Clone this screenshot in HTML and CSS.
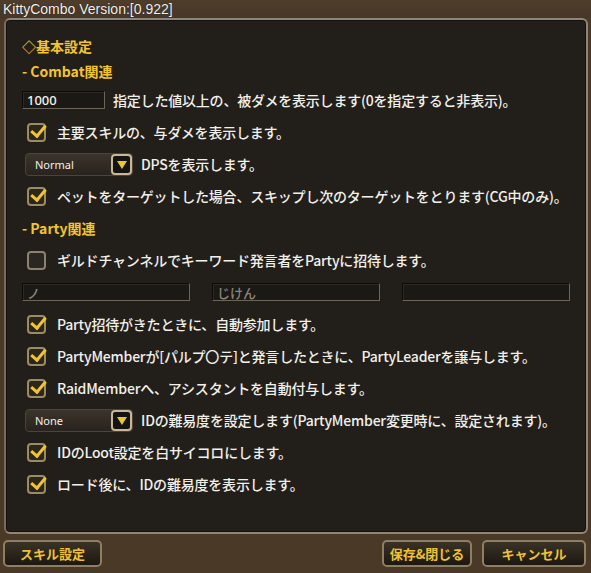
FILE: index.html
```html
<!DOCTYPE html>
<html lang="ja">
<head>
    <meta charset="UTF-8">
    <title>KittyCombo</title>
    <link rel="stylesheet" href="styles.css">
</head>
<body>
    <div class="window">
        <div class="titlebar">KittyCombo Version:[0.922]</div>

        <div class="panel">
            <div class="heading h1">◇基本設定</div>
            <div class="heading h2">- Combat関連</div>

            <div class="row">
                <input class="field field-num" type="text" value="1000">
                <span class="label">指定した値以上の、被ダメを表示します(0を指定すると非表示)。</span>
            </div>
            <div class="row">
                <span class="check on"></span>
                <span class="label">主要スキルの、与ダメを表示します。</span>
            </div>
            <div class="row">
                <div class="select"><span>Normal</span><i class="arrow"></i></div>
                <span class="label">DPSを表示します。</span>
            </div>
            <div class="row">
                <span class="check on"></span>
                <span class="label">ペットをターゲットした場合、スキップし次のターゲットをとります(CG中のみ)。</span>
            </div>

            <div class="heading row-head">- Party関連</div>

            <div class="row">
                <span class="check"></span>
                <span class="label">ギルドチャンネルでキーワード発言者をPartyに招待します。</span>
            </div>
            <div class="row fields">
                <input class="field field-wide" type="text" value="ノ">
                <input class="field field-wide" type="text" value="じけん">
                <input class="field field-wide" type="text" value="">
            </div>
            <div class="row">
                <span class="check on"></span>
                <span class="label">Party招待がきたときに、自動参加します。</span>
            </div>
            <div class="row">
                <span class="check on"></span>
                <span class="label">PartyMemberが[パルプ〇テ]と発言したときに、PartyLeaderを譲与します。</span>
            </div>
            <div class="row">
                <span class="check on"></span>
                <span class="label">RaidMemberへ、アシスタントを自動付与します。</span>
            </div>
            <div class="row">
                <div class="select"><span>None</span><i class="arrow"></i></div>
                <span class="label">IDの難易度を設定します(PartyMember変更時に、設定されます)。</span>
            </div>
            <div class="row">
                <span class="check on"></span>
                <span class="label">IDのLoot設定を白サイコロにします。</span>
            </div>
            <div class="row">
                <span class="check on"></span>
                <span class="label">ロード後に、IDの難易度を表示します。</span>
            </div>
        </div>

        <div class="footer">
            <button class="btn btn-skill">スキル設定</button>
            <div class="spacer"></div>
            <button class="btn btn-save">保存&amp;閉じる</button>
            <button class="btn btn-cancel">キャンセル</button>
        </div>
    </div>
</body>
</html>
```

FILE: styles.css
```css
html, body {
    margin: 0;
    padding: 0;
}

body {
    width: 591px;
    height: 573px;
    background: #4a3926;
    font-family: "Noto Sans CJK JP", "Noto Sans", sans-serif;
    color: #f2f0ea;
    overflow: hidden;
}

.window {
    height: 573px;
    display: flex;
    flex-direction: column;
}

.titlebar {
    height: 18px;
    line-height: 18px;
    padding-left: 3px;
    font-family: "Liberation Sans", Arial, sans-serif;
    font-size: 14px;
    color: #f4f2ee;
    background: linear-gradient(#4f3d2a, #47372a);
    text-shadow: 0 0 1px #000;
}

.panel {
    height: 516px;
    margin: 0 3px 0 4px;
    padding: 13px 0 0 16px;
    box-sizing: border-box;
    background: #221f1b;
    border: 2px solid #8f8677;
    border-left-color: #7a6c5a;
    border-radius: 6px;
    box-shadow: inset 0 0 0 1px #141210;
}

.heading {
    color: #f2c42e;
    font-size: 14px;
    font-weight: 700;
    display: flex;
    align-items: center;
}

.h1 { height: 25px; }
.h2 { height: 26px; }
.row-head { height: 32px; }

.row {
    height: 32px;
    display: flex;
    align-items: center;
}

.label {
    font-size: 14px;
    font-weight: 500;
    white-space: nowrap;
    letter-spacing: -0.2px;
}

.field {
    height: 18px;
    box-sizing: border-box;
    background: #1b1916;
    border: 1px solid #0c0b0a;
    border-right-color: #6c655a;
    border-bottom-color: #6c655a;
    box-shadow: inset 1px 1px 0 #2c2924;
    color: #f4f2ee;
    font-family: "Noto Sans", sans-serif;
    font-size: 13px;
    font-weight: 500;
    padding: 0 4px;
    outline: none;
}

.field-num {
    width: 83px;
    margin-right: 8px;
}

.fields {
    gap: 22px;
}

.field-wide {
    width: 168px;
    color: #8b857b;
    font-family: "Noto Sans CJK JP", sans-serif;
}

.check {
    width: 19px;
    height: 19px;
    box-sizing: border-box;
    margin: 0 11px 0 5px;
    border: 2px solid #8c8070;
    border-radius: 4px;
    background: #2a2621;
    position: relative;
}

.check.on {
    border-color: #9d8a63;
}

.check.on::after {
    content: "";
    position: absolute;
    left: 5px;
    top: -3px;
    width: 6px;
    height: 12px;
    border: solid #f3c42c;
    border-width: 0 3px 3px 0;
    transform: rotate(40deg);
}

.select {
    width: 108px;
    height: 23px;
    margin: 0 8px 0 3px;
    box-sizing: border-box;
    display: flex;
    align-items: center;
    justify-content: space-between;
    padding: 0 0 0 9px;
    background: linear-gradient(#3b342b, #28231d);
    border: 1px solid #4d4436;
    border-radius: 4px;
    font-family: "Noto Sans", sans-serif;
    font-size: 11px;
}

.arrow {
    width: 21px;
    height: 21px;
    box-sizing: border-box;
    border: 2px solid #c8b898;
    border-radius: 4px;
    background: #161412;
    position: relative;
}

.arrow::after {
    content: "";
    position: absolute;
    left: 4px;
    top: 5px;
    border-left: 5px solid transparent;
    border-right: 5px solid transparent;
    border-top: 8px solid #e8c43a;
}

.footer {
    flex: 1;
    display: flex;
    align-items: center;
    padding: 0 5px 0 3px;
    gap: 10px;
}

.spacer {
    flex: 1;
}

.btn {
    height: 27px;
    box-sizing: border-box;
    background: linear-gradient(#3a3226, #1c1812);
    border: 2px solid #8e7f62;
    border-radius: 5px;
    color: #f0c233;
    font-family: "Noto Sans CJK JP", sans-serif;
    font-size: 13px;
    font-weight: 700;
    padding: 0;
}

.btn-skill { width: 99px; }
.btn-save { width: 90px; }
.btn-cancel { width: 104px; }
```
